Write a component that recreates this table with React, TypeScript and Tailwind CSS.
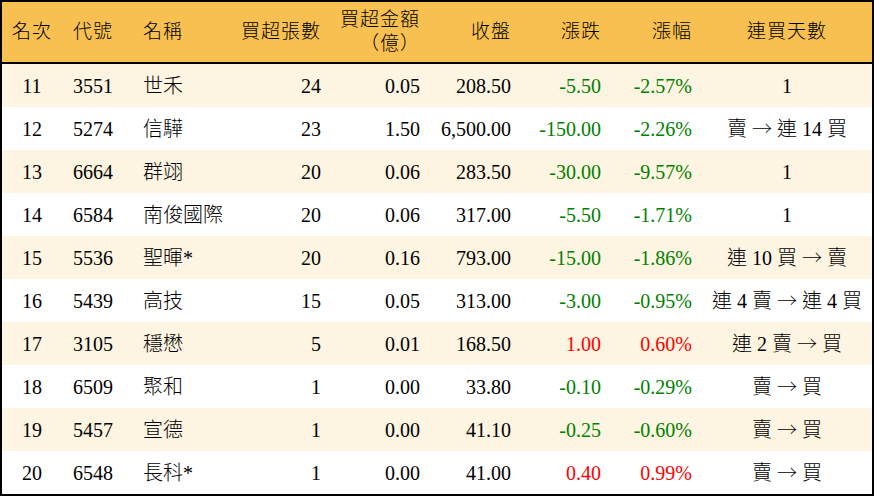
const rows = [
  { rank: 11, code: '3551', name: '世禾', lots: '24', amount: '0.05', close: '208.50', chg: '-5.50', pct: '-2.57%', streak: '1' },
  { rank: 12, code: '5274', name: '信驊', lots: '23', amount: '1.50', close: '6,500.00', chg: '-150.00', pct: '-2.26%', streak: '賣 → 連 14 買' },
  { rank: 13, code: '6664', name: '群翊', lots: '20', amount: '0.06', close: '283.50', chg: '-30.00', pct: '-9.57%', streak: '1' },
  { rank: 14, code: '6584', name: '南俊國際', lots: '20', amount: '0.06', close: '317.00', chg: '-5.50', pct: '-1.71%', streak: '1' },
  { rank: 15, code: '5536', name: '聖暉*', lots: '20', amount: '0.16', close: '793.00', chg: '-15.00', pct: '-1.86%', streak: '連 10 買 → 賣' },
  { rank: 16, code: '5439', name: '高技', lots: '15', amount: '0.05', close: '313.00', chg: '-3.00', pct: '-0.95%', streak: '連 4 賣 → 連 4 買' },
  { rank: 17, code: '3105', name: '穩懋', lots: '5', amount: '0.01', close: '168.50', chg: '1.00', pct: '0.60%', streak: '連 2 賣 → 買' },
  { rank: 18, code: '6509', name: '聚和', lots: '1', amount: '0.00', close: '33.80', chg: '-0.10', pct: '-0.29%', streak: '賣 → 買' },
  { rank: 19, code: '5457', name: '宣德', lots: '1', amount: '0.00', close: '41.10', chg: '-0.25', pct: '-0.60%', streak: '賣 → 買' },
  { rank: 20, code: '6548', name: '長科*', lots: '1', amount: '0.00', close: '41.00', chg: '0.40', pct: '0.99%', streak: '賣 → 買' },
];

// fixed column widths so header and rows line up
const cols = 'grid grid-cols-[60px_70px_100px_99px_99px_91px_90px_91px_170px]';

// arrows in the CJK font come out full width, like the source
const Streak = ({ text }: { text: string }) => {
  const parts = text.split('→');
  return (
    <>
      {parts.map((p, i) => (
        <span key={i}>
          {p}
          {i < parts.length - 1 && <span className="font-['Noto_Sans_CJK_TC'] font-thin">→</span>}
        </span>
      ))}
    </>
  );
};

const App = () => {
  return (
    <div
      className="w-[874px] h-[496px] bg-white border-2 border-black text-black text-[20px] font-light"
      style={{ fontFamily: '"Liberation Serif", "Noto Sans CJK TC", serif' }}
    >
      <div className={`${cols} h-[62px] items-center bg-[#f8c050] border-b-2 border-black text-[19px] tracking-[1px]`}>
        <div className="text-center">名次</div>
        <div className="pl-[11px]">代號</div>
        <div className="pl-[11px]">名稱</div>
        <div className="text-right pr-[10px]">買超張數</div>
        <div className="text-right pr-[10px] leading-[24px]">
          <div>買超金額</div>
          <div>（億）</div>
        </div>
        <div className="text-right pr-[10px]">收盤</div>
        <div className="text-right pr-[10px]">漲跌</div>
        <div className="text-right pr-[10px]">漲幅</div>
        <div className="text-center">連買天數</div>
      </div>
      {rows.map((r, i) => {
        const up = !r.chg.startsWith('-');
        const color = up ? 'text-[#ff0000]' : 'text-[#008000]';
        return (
          <div
            key={r.rank}
            className={`${cols} h-[43px] items-center ${i % 2 === 0 ? 'bg-[#fdf4e1]' : 'bg-white'}`}
          >
            <div className="text-center">{r.rank}</div>
            <div className="pl-[11px]">{r.code}</div>
            <div className="pl-[11px]">{r.name}</div>
            <div className="text-right pr-[10px]">{r.lots}</div>
            <div className="text-right pr-[10px]">{r.amount}</div>
            <div className="text-right pr-[10px]">{r.close}</div>
            <div className={`text-right pr-[10px] ${color}`}>{r.chg}</div>
            <div className={`text-right pr-[10px] ${color}`}>{r.pct}</div>
            <div className="text-center whitespace-pre">
              <Streak text={r.streak} />
            </div>
          </div>
        );
      })}
    </div>
  );
};

export default App;
